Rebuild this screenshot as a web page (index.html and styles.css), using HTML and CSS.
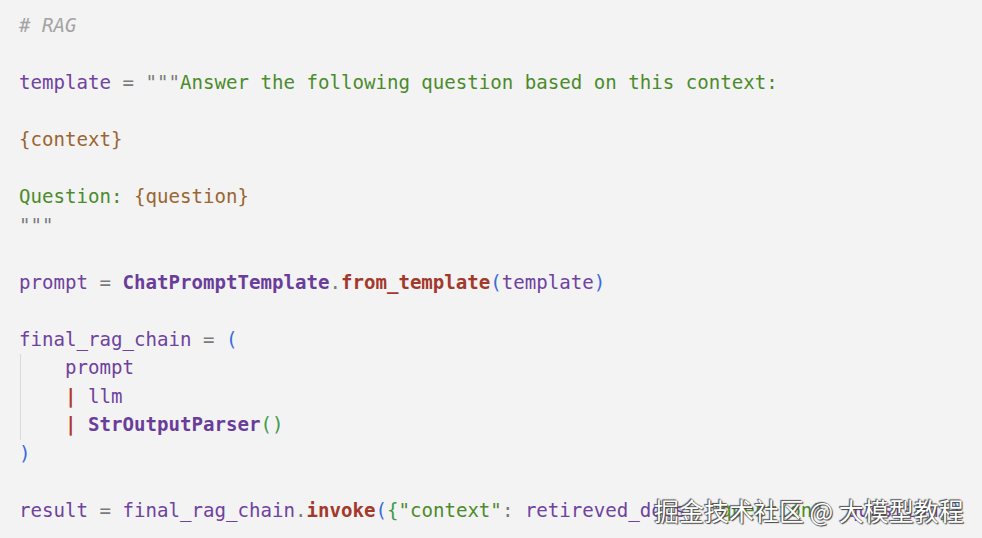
FILE: index.html
```html
<!DOCTYPE html>
<html>
<head>
<meta charset="utf-8">
<link rel="stylesheet" href="styles.css">
</head>
<body>
<div class="code">
<div class="ln"><span class="cm"># RAG</span></div>
<div class="ln"> </div>
<div class="ln"><span class="v">template</span> <span class="p">=</span> <span class="p">"""</span><span class="s">Answer the following question based on this context:</span></div>
<div class="ln"> </div>
<div class="ln"><span class="b">{context}</span></div>
<div class="ln"> </div>
<div class="ln"><span class="s">Question: </span><span class="b">{question}</span></div>
<div class="ln"><span class="p">"""</span></div>
<div class="ln"> </div>
<div class="ln"><span class="v">prompt</span> <span class="p">=</span> <span class="cls">ChatPromptTemplate</span><span class="p">.</span><span class="fn">from_template</span><span class="pb">(</span><span class="v">template</span><span class="pb">)</span></div>
<div class="ln"> </div>
<div class="ln"><span class="v">final_rag_chain</span> <span class="p">=</span> <span class="pb">(</span></div>
<div class="guide">
<div class="ln">    <span class="v">prompt</span></div>
<div class="ln">    <span class="op">|</span> <span class="v">llm</span></div>
<div class="ln">    <span class="op">|</span> <span class="cls">StrOutputParser</span><span class="pg">()</span></div>
</div>
<div class="ln"><span class="pb">)</span></div>
<div class="ln"> </div>
<div class="ln"><span class="v">result</span> <span class="p">=</span> <span class="v">final_rag_chain</span><span class="p">.</span><span class="fn">invoke</span><span class="pb">(</span><span class="pg">{</span><span class="s">"context"</span><span class="p">:</span> <span class="v">retireved_docs</span><span class="p">,</span> <span class="s">"question"</span><span class="p">:</span> <span class="v">question</span><span class="pg">}</span><span class="pb">)</span></div>
</div>
<div class="wm">掘金技术社区 @ 大模型教程</div>
</body>
</html>
```
FILE: styles.css
```css
html, body {
  margin: 0;
  padding: 0;
  background: #f3f3f3;
}
body {
  width: 982px;
  height: 538px;
  overflow: hidden;
  position: relative;
}
.code {
  padding: 12px 0 0 19px;
  font-family: "DejaVu Sans Mono", "Liberation Mono", monospace;
  font-size: 19.1px;
  line-height: 28.53px;
  color: #6f42a0;
}
.ln {
  white-space: pre;
  height: 28.53px;
}
.guide {
  background: linear-gradient(#d9d9d9, #d9d9d9) no-repeat 1px 0 / 1px 100%;
}
.cm { color: #a3a3a3; font-style: italic; }
.v { color: #6f42a0; }
.p { color: #7a7a7a; }
.s { color: #4b8b2b; }
.b { color: #9a6530; }
.cls { color: #6a3d9a; font-weight: bold; }
.fn { color: #a3392c; font-weight: bold; }
.pb { color: #3a6be0; }
.pg { color: #3e9a4a; }
.op { color: #b0362c; font-weight: bold; }
.wm {
  position: absolute;
  left: 654px;
  top: 492px;
  font-family: "Noto Sans CJK SC", sans-serif;
  font-size: 25px;
  line-height: 36px;
  color: #ffffff;
  text-shadow: 0 0 1px #333, 1px 1px 1px #444, -1px -1px 1px #555;
  white-space: pre;
}
```
